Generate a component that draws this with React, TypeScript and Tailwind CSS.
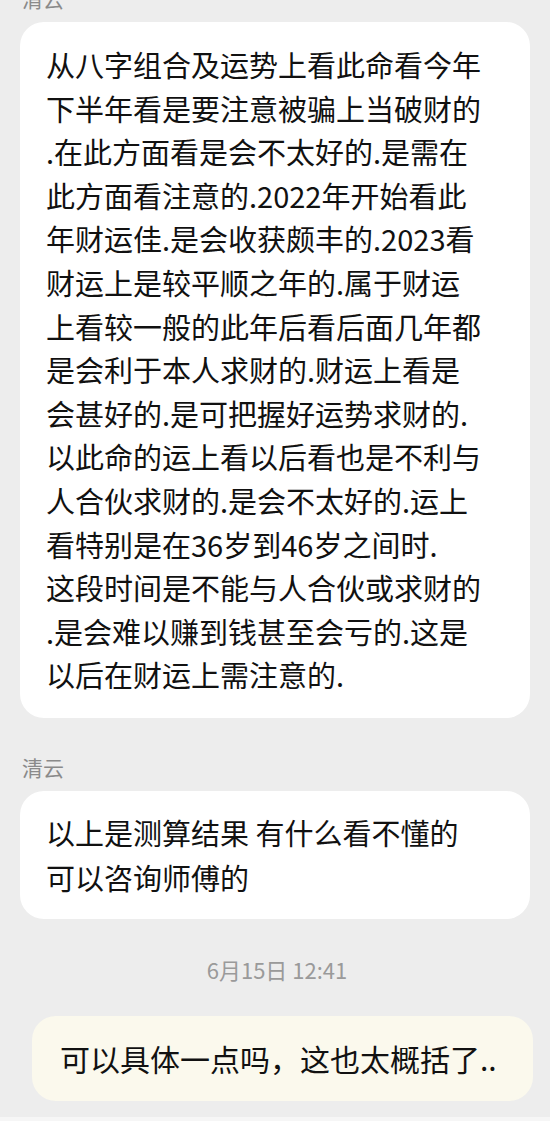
import React from 'react';

const firstLines = [
  '从八字组合及运势上看此命看今年',
  '下半年看是要注意被骗上当破财的',
  '.在此方面看是会不太好的.是需在',
  '此方面看注意的.2022年开始看此',
  '年财运佳.是会收获颇丰的.2023看',
  '财运上是较平顺之年的.属于财运',
  '上看较一般的此年后看后面几年都',
  '是会利于本人求财的.财运上看是',
  '会甚好的.是可把握好运势求财的.',
  '以此命的运上看以后看也是不利与',
  '人合伙求财的.是会不太好的.运上',
  '看特别是在36岁到46岁之间时.',
  '这段时间是不能与人合伙或求财的',
  '.是会难以赚到钱甚至会亏的.这是',
  '以后在财运上需注意的.',
];

const font = { fontFamily: '"Noto Sans CJK SC", "Noto Sans", sans-serif' };

const Name = ({ className = '' }: { className?: string }) => (
  <div className={`pl-[22px] text-[21px] leading-[30px] text-[#8a8a8a] ${className}`}>清云</div>
);

const Bubble = ({ lines, className = '' }: { lines: string[]; className?: string }) => (
  <div className={`mx-[20px] rounded-[24px] bg-white pl-[26px] pr-4 text-[29px] text-[#111] ${className}`}>
    {lines.map((l, i) => (
      <div key={i} className="whitespace-nowrap">
        {l}
      </div>
    ))}
  </div>
);

export default function App() {
  return (
    <div className="h-[1121px] w-[550px] overflow-hidden bg-[#ededed] flex flex-col" style={font}>
      <Name className="-mt-[17px]" />
      <Bubble lines={firstLines} className="mt-[9px] py-[21px] leading-[43.6px]" />
      <Name className="mt-[34px]" />
      <Bubble
        lines={['以上是测算结果 有什么看不懂的', '可以咨询师傅的']}
        className="mt-[9px] py-[19px] leading-[45px]"
      />
      <div className="mt-[36px] text-center text-[22px] leading-[28px] text-[#9a9a9a] pl-[4px]">6月15日 12:41</div>
      <div className="mt-[33px] ml-[32px] mr-[17px] rounded-[24px] bg-[#fbf9ed] pl-[28px] h-[85px] flex items-center text-[30px] text-[#111] whitespace-nowrap">
        可以具体一点吗，这也太概括了..
      </div>
      <div className="mt-auto h-[4px] bg-[#f6f6f6]" />
    </div>
  );
}
